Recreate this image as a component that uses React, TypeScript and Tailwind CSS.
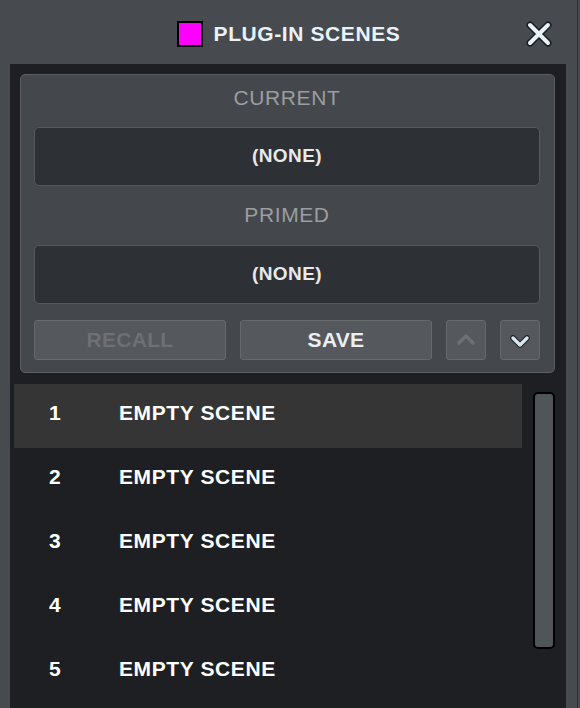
import React from "react";

const font = { fontFamily: '"Liberation Sans", Arial, sans-serif' };

function CloseX() {
  return (
    <svg width="30" height="30" viewBox="0 0 30 30">
      <g strokeLinecap="round">
        <line x1="6" y1="6" x2="24" y2="24" stroke="#1a1c1f" strokeWidth="7" />
        <line x1="24" y1="6" x2="6" y2="24" stroke="#1a1c1f" strokeWidth="7" />
        <line x1="6" y1="6" x2="24" y2="24" stroke="#e6f1f9" strokeWidth="4" />
        <line x1="24" y1="6" x2="6" y2="24" stroke="#e6f1f9" strokeWidth="4" />
      </g>
    </svg>
  );
}

function Chevron({ up, bright }: { up?: boolean; bright?: boolean }) {
  const d = up ? "M7 15 L14 8 L21 15" : "M7 10 L14 17 L21 10";
  return (
    <svg width="28" height="24" viewBox="0 0 28 24">
      {bright && (
        <path d={d} fill="none" stroke="#1a1c1f" strokeWidth="5.5" strokeLinecap="round" strokeLinejoin="round" />
      )}
      <path
        d={d}
        fill="none"
        stroke={bright ? "#d9e6ee" : "#6c6f73"}
        strokeWidth="3.5"
        strokeLinecap="round"
        strokeLinejoin="round"
      />
    </svg>
  );
}

export default function App() {
  const rows = [1, 2, 3, 4, 5];
  return (
    <div className="relative w-[580px] h-[708px] bg-[#474a4f] overflow-hidden flex flex-col" style={font}>
      <div className="absolute top-0 bottom-0 left-[577px] w-px bg-[#2a2c30]" />
      {/* header */}
      <div className="relative h-[64px] flex items-center justify-center shrink-0">
        <div className="flex items-center gap-[11px] -ml-[3px] mt-[3px]">
          <div className="w-[26px] h-[26px] bg-[#ff00ff] border-2 border-black" />
          <span className="text-[21px] font-bold text-[#e8f2fa] tracking-[0.6px] leading-none">PLUG-IN SCENES</span>
        </div>
        <div className="absolute left-[524px] top-[19px]">
          <CloseX />
        </div>
      </div>
      {/* dark panel */}
      <div className="ml-[10px] w-[556px] flex-1 bg-[#1e1f23] pt-[10px] pl-[10px] pr-[11px] flex flex-col">
        <div className="border border-[#5b5e63] rounded-[5px] bg-[#44474b] pl-[13px] pr-[14px] pt-[11px] pb-[12px] flex flex-col">
          <div className="h-[24px] flex items-center justify-center text-[21px] text-[#9b9ea1] tracking-[0.6px]">CURRENT</div>
          <div className="mt-[17px] h-[59px] rounded-[5px] bg-[#2d3034] border border-[#56595d] flex items-center justify-center text-[19px] font-bold text-[#e8e9ea] tracking-[0.4px]">
            (NONE)
          </div>
          <div className="mt-[17px] h-[24px] flex items-center justify-center text-[21px] text-[#9b9ea1] tracking-[0.6px]">PRIMED</div>
          <div className="mt-[18px] h-[59px] rounded-[5px] bg-[#2d3034] border border-[#56595d] flex items-center justify-center text-[19px] font-bold text-[#e8e9ea] tracking-[0.4px]">
            (NONE)
          </div>
          <div className="mt-[16px] h-[40px] flex gap-[14px]">
            <div className="w-[192px] rounded-[3px] bg-[#55585c] border border-[#65686c] flex items-center justify-center text-[21px] font-bold text-[#6d7074] tracking-[0.3px]">
              RECALL
            </div>
            <div className="w-[192px] rounded-[3px] bg-[#55585c] border border-[#65686c] flex items-center justify-center text-[21px] font-bold text-[#eceeef] tracking-[0.3px]">
              SAVE
            </div>
            <div className="w-[40px] rounded-[3px] bg-[#55585c] border border-[#65686c] flex items-center justify-center">
              <Chevron up />
            </div>
            <div className="w-[40px] rounded-[3px] bg-[#55585c] border border-[#65686c] flex items-center justify-center">
              <Chevron bright />
            </div>
          </div>
        </div>
        {/* list */}
        <div className="mt-[11px] -ml-[6px] flex">
          <div className="w-[508px] flex flex-col">
            {rows.map((n) => (
              <div
                key={n}
                className={`h-[64px] flex items-center pb-[6px] text-[21px] font-bold text-white tracking-[0.6px] ${
                  n === 1 ? "bg-[#353535]" : ""
                }`}
              >
                <span className="w-[105px] pl-[35px]">{n}</span>
                <span>EMPTY SCENE</span>
              </div>
            ))}
          </div>
          <div className="ml-[11px] mt-[8px] w-[22px] h-[257px] rounded-[5px] border-2 border-black bg-[#50555a]" />
        </div>
      </div>
    </div>
  );
}
